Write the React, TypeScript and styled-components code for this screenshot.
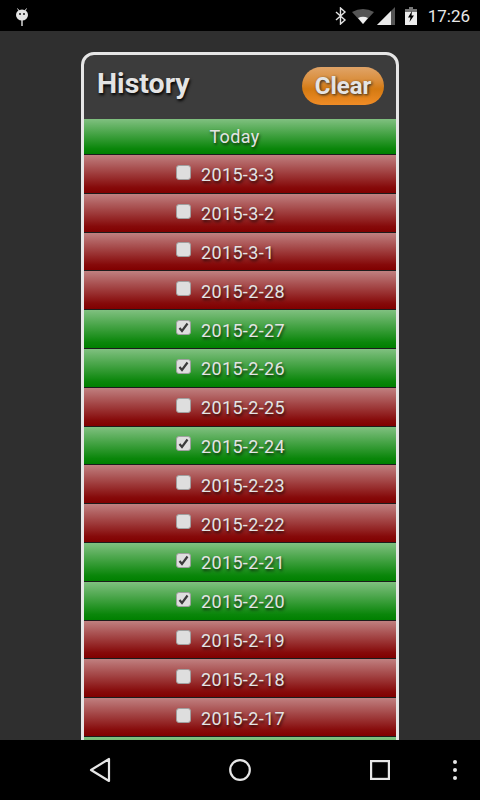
import type { ReactNode } from "react";
import styled, { createGlobalStyle } from "styled-components";

const GlobalStyle = createGlobalStyle`
  html, body {
    margin: 0;
    padding: 0;
    background: #000;
  }
  * {
    box-sizing: border-box;
  }
`;

const Screen = styled.div`
  width: 480px;
  height: 800px;
  display: flex;
  flex-direction: column;
  overflow: hidden;
  font-family: Roboto, "Liberation Sans", sans-serif;
`;

const StatusBar = styled.div`
  height: 31px;
  flex: none;
  background: #000;
  display: flex;
  align-items: center;
  justify-content: space-between;
  padding: 0 10px 0 15px;
  color: #e4e4e4;
`;

const StatusRight = styled.div`
  display: flex;
  align-items: center;
  gap: 3px;
`;

const Clock = styled.span`
  font-size: 17px;
  margin-left: 8px;
  color: #e8e8e8;
`;

const Content = styled.main`
  flex: 1;
  min-height: 0;
  overflow: hidden;
  background: #2f2f2f;
  padding: 21px 81px 0;
`;

const Card = styled.section`
  border: 3px solid #e6e6e6;
  border-radius: 13px 13px 0 0;
  background: #3c3c3c;
  overflow: hidden;
`;

const CardHeader = styled.header`
  height: 64px;
  display: flex;
  align-items: center;
  justify-content: space-between;
  padding: 0 12px 0 13px;
`;

const Title = styled.h1`
  margin: 0 0 8px;
  font-size: 28.5px;
  font-weight: 700;
  color: #e4e4e4;
  text-shadow: 1px 2px 3px #000;
`;

const ClearButton = styled.button`
  width: 82px;
  height: 38px;
  margin-top: -2px;
  padding: 0;
  border: none;
  border-radius: 19px;
  font-family: inherit;
  font-size: 24px;
  font-weight: 700;
  color: #e4e4e4;
  text-shadow: 1px 1px 3px #222;
  background: linear-gradient(#e0a468 0%, #da8e3c 35%, #d47a12 58%, #f08c26 100%);
`;

const Row = styled.div<{ $done: boolean; $height: number }>`
  height: ${(p) => p.$height}px;
  display: flex;
  align-items: center;
  color: #e4e4e4;
  font-size: 18px;
  text-shadow: 1px 2px 3px rgba(0, 0, 0, 0.7);
  border-bottom: 1px solid #1c1c1c;
  background: ${(p) =>
    p.$done
      ? "linear-gradient(#80c080 0%, #0a860a 85%, #008000 100%)"
      : "linear-gradient(#c08080 0%, #860a0a 85%, #800000 100%)"};
`;

const TodayRow = styled(Row)`
  justify-content: center;
  padding-right: 11px;
  letter-spacing: 0.35px;
`;

const DateRow = styled(Row)`
  padding-left: 92px;
  gap: 10px;
`;

const Check = styled.span`
  width: 15px;
  height: 15px;
  margin-top: -3px;
  flex: none;
  display: flex;
  align-items: center;
  justify-content: center;
  background: #dedede;
  border: 1px solid #a0a0a0;
  border-radius: 3px;
`;

const DateLabel = styled.span`
  letter-spacing: 0.35px;
  margin-top: 2px;
`;

const NavBar = styled.nav`
  height: 60px;
  flex: none;
  background: #000;
  display: flex;
  align-items: center;
  padding-left: 89px;
`;

const NavSlot = styled.span<{ $gap: number }>`
  display: flex;
  margin-left: ${(p) => p.$gap}px;
`;

const days: [string, boolean][] = [
  ["2015-3-3", false],
  ["2015-3-2", false],
  ["2015-3-1", false],
  ["2015-2-28", false],
  ["2015-2-27", true],
  ["2015-2-26", true],
  ["2015-2-25", false],
  ["2015-2-24", true],
  ["2015-2-23", false],
  ["2015-2-22", false],
  ["2015-2-21", true],
  ["2015-2-20", true],
  ["2015-2-19", false],
  ["2015-2-18", false],
  ["2015-2-17", false],
];

function Nav({ gap, children }: { gap: number; children: ReactNode }) {
  return <NavSlot $gap={gap}>{children}</NavSlot>;
}

export default function App() {
  return (
    <>
      <GlobalStyle />
      <Screen>
        <StatusBar>
          <svg width="14" height="21" viewBox="0 0 14 21" fill="#e4e4e4">
            <ellipse cx="7" cy="10" rx="6" ry="5.500" />
            <path d="M2.500 3.500l2 3M11.500 3.500l-2 3" stroke="#e4e4e4" strokeWidth="1" />
            <rect x="6.300" y="15" width="1.400" height="6" />
            <circle cx="5" cy="9" r="0.900" fill="#000" />
            <circle cx="9" cy="9" r="0.900" fill="#000" />
          </svg>
          <StatusRight>
            <svg width="12" height="18" viewBox="0 0 12 18" fill="none" stroke="#e4e4e4" strokeWidth="1.400">
              <path d="M1 5l9 8-4.500 4V1L10 5l-9 8" />
            </svg>
            <svg width="22" height="16" viewBox="0 0 22 16" style={{ marginLeft: 2 }}>
              <path d="M0 4Q11-2 22 4L11 16z" fill="#555" />
              <path d="M6 10Q11 7.500 16 10L11 16z" fill="#f0f0f0" />
            </svg>
            <svg width="18" height="18" viewBox="0 0 18 18">
              <path d="M0 18L18 0v18z" fill="#555" />
              <path d="M0 18L14 4v14z" fill="#eaeaea" />
            </svg>
            <svg width="12" height="18" viewBox="0 0 12 18" style={{ marginLeft: 7 }}>
              <rect x="4" y="0" width="4" height="2" fill="#777" />
              <rect x="0" y="2" width="12" height="3" fill="#777" />
              <rect x="0" y="5" width="12" height="13" fill="#eee" />
              <path d="M7 4L3 10.500h2.500L4.500 15 9 8.500H6.500z" fill="#000" />
            </svg>
            <Clock>17:26</Clock>
          </StatusRight>
        </StatusBar>
        <Content>
          <Card>
            <CardHeader>
              <Title>History</Title>
              <ClearButton>Clear</ClearButton>
            </CardHeader>
            <TodayRow $done $height={36}>Today</TodayRow>
            {days.map(([day, done]) => (
              <DateRow key={day} $done={done} $height={38.8}>
                <Check>
                  {done && (
                    <svg width="11" height="11" viewBox="0 0 11 11">
                      <path d="M1.500 6l2.500 3L9.500 1.500" fill="none" stroke="#3a3a3a" strokeWidth="2.200" />
                    </svg>
                  )}
                </Check>
                <DateLabel>{day}</DateLabel>
              </DateRow>
            ))}
            {/* next row only peeks in above the nav bar */}
            <Row $done $height={38.8} />
          </Card>
        </Content>
        <NavBar>
          <svg width="22" height="26" viewBox="0 0 22 26" fill="none" stroke="#e6e6e6" strokeWidth="2.200">
            <path d="M20 2v22L2 13z" strokeLinejoin="round" />
          </svg>
          <Nav gap={117}>
            <svg width="24" height="24" viewBox="0 0 24 24" fill="none" stroke="#e6e6e6" strokeWidth="2.200">
              <circle cx="12" cy="12" r="9.800" />
            </svg>
          </Nav>
          <Nav gap={118}>
            <svg width="20" height="20" viewBox="0 0 20 20" fill="none" stroke="#e6e6e6" strokeWidth="2.200">
              <rect x="1.100" y="1.100" width="17.800" height="17.800" />
            </svg>
          </Nav>
          <Nav gap={62}>
            <svg width="6" height="22" viewBox="0 0 6 22" fill="#e6e6e6">
              <circle cx="3" cy="3" r="2" />
              <circle cx="3" cy="11" r="2" />
              <circle cx="3" cy="19" r="2" />
            </svg>
          </Nav>
        </NavBar>
      </Screen>
    </>
  );
}
